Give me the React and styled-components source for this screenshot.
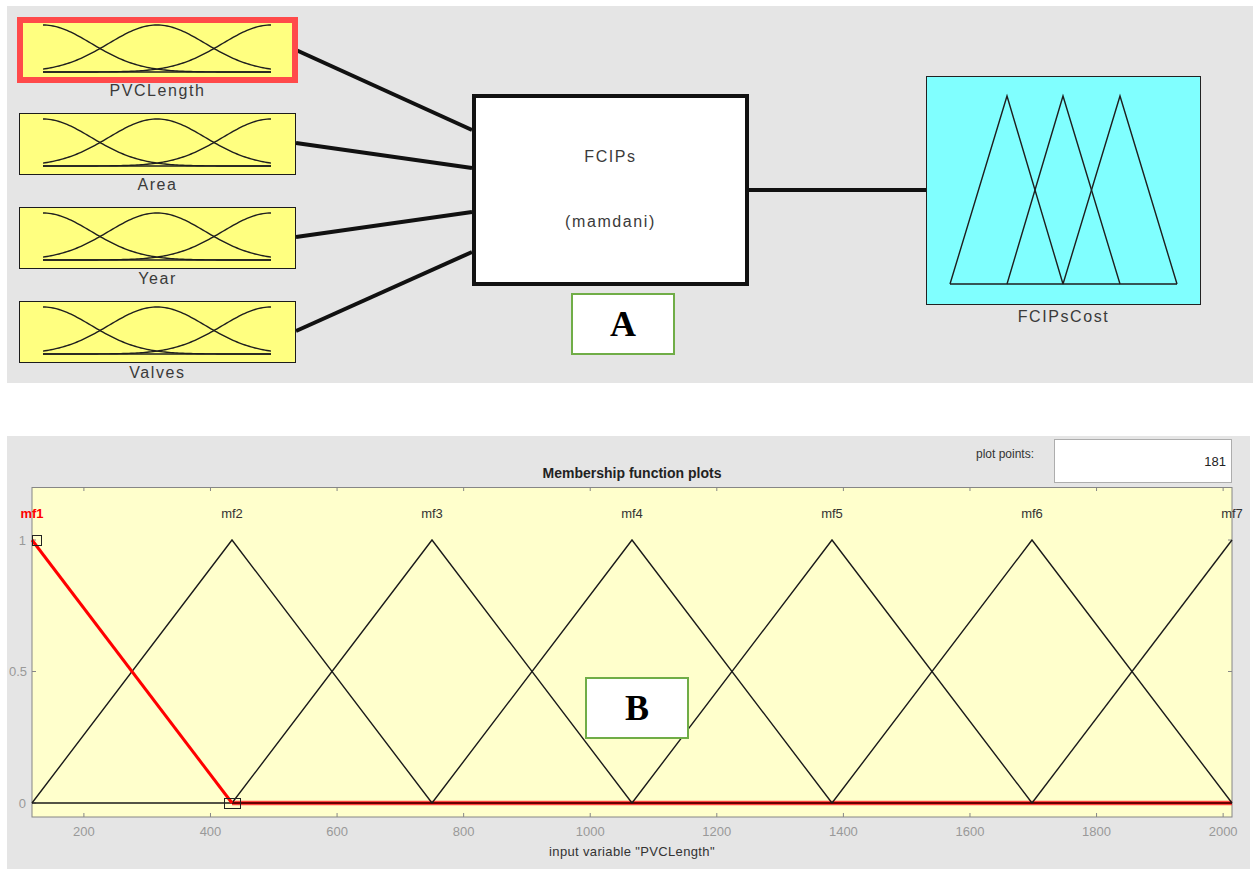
import React from "react";
import styled, { createGlobalStyle } from "styled-components";

const Global = createGlobalStyle`
  html, body { margin: 0; padding: 0; background: #ffffff; overflow: hidden; }
  body { font-family: "Liberation Sans", Arial, sans-serif; }
`;

const Page = styled.div`
  display: flex;
  flex-direction: column;
  padding: 6px 0 0 7px;
  width: 1253px;
  height: 869px;
  box-sizing: border-box;
`;

/* ---------- Panel A : FIS editor diagram ---------- */
const PanelA = styled.div`
  position: relative;
  width: 1246px;
  height: 377px;
  background: #e5e5e5;
  display: flex;
  align-items: flex-start;
`;

const Wires = styled.svg`
  position: absolute;
  left: 0;
  top: 0;
  pointer-events: none;
`;

const InputColumn = styled.div`
  position: relative;
  z-index: 1;
  display: flex;
  flex-direction: column;
  padding: 13px 0 0 12px;
`;

const InputBlock = styled.div`
  display: flex;
  flex-direction: column;
  height: 94px;
`;

const VarBox = styled.div`
  width: 277px;
  height: 62px;
  box-sizing: border-box;
  border: 1px solid #1c1c1c;
  background: #ffff80;
  box-shadow: ${(p) =>
    p.$selected ? "0 0 0 2px #ff4a4a, inset 0 0 0 3px #ff4a4a" : "none"};
  ${(p) => (p.$selected ? "border-color: #ff4a4a;" : "")}
`;

const VarLabel = styled.div`
  font-family: "Liberation Sans", Arial, sans-serif;
  font-size: 16px;
  line-height: 18px;
  letter-spacing: 1.6px;
  color: #3a3a3a;
  text-align: center;
  margin-top: ${(p) => p.$gap || 1}px;
`;

const CenterColumn = styled.div`
  position: relative;
  z-index: 1;
  display: flex;
  flex-direction: column;
  align-items: flex-start;
  margin: 88px 0 0 176px;
`;

const FisBox = styled.div`
  width: 277px;
  height: 192px;
  box-sizing: border-box;
  border: 4px solid #111111;
  background: #ffffff;
  display: flex;
  flex-direction: column;
  align-items: center;
  padding-top: 50px;
  gap: 47px;
`;

const FisText = styled.div`
  font-size: 16px;
  line-height: 18px;
  letter-spacing: 1.6px;
  color: #3a3a3a;
`;

const Badge = styled.div`
  width: 104px;
  height: 62px;
  box-sizing: border-box;
  border: 2px solid #70ad47;
  background: #ffffff;
  display: flex;
  align-items: center;
  justify-content: center;
  font-family: "Liberation Serif", "Times New Roman", serif;
  font-weight: bold;
  font-size: 36px;
  color: #000000;
`;

const BadgeA = styled(Badge)`
  margin: 7px 0 0 99px;
`;

const BadgeB = styled(Badge)`
  position: absolute;
  left: 578px;
  top: 241px;
  z-index: 2;
`;

const OutputColumn = styled.div`
  position: relative;
  z-index: 1;
  display: flex;
  flex-direction: column;
  margin: 70px 0 0 177px;
`;

const OutBox = styled.div`
  width: 275px;
  height: 229px;
  box-sizing: border-box;
  border: 1px solid #222222;
  background: #80ffff;
`;

/* ---------- Panel B : membership function plot ---------- */
const PanelB = styled.div`
  position: relative;
  width: 1243px;
  height: 433px;
  margin-top: 53px;
  background: #e5e5e5;
  display: flex;
  flex-direction: column;
`;

const Header = styled.div`
  display: grid;
  width: 1200px;
  height: 51px;
  margin-left: 25px;
`;

const Title = styled.div`
  grid-area: 1 / 1;
  justify-self: center;
  align-self: end;
  margin-bottom: 6px;
  font-size: 14px;
  line-height: 16px;
  font-weight: bold;
  color: #222222;
`;

const PlotPoints = styled.div`
  grid-area: 1 / 1;
  justify-self: end;
  align-self: start;
  margin-top: 3px;
  display: flex;
  align-items: flex-start;
`;

const PPLabel = styled.div`
  font-size: 12px;
  line-height: 14px;
  color: #333333;
  margin: 8px 20px 0 0;
`;

const PPBox = styled.div`
  width: 178px;
  height: 44px;
  box-sizing: border-box;
  border: 1px solid #adadad;
  background: #ffffff;
  display: flex;
  align-items: center;
  justify-content: flex-end;
  padding-right: 5px;
  font-size: 13px;
  color: #222222;
`;

const Chart = styled.svg`
  display: block;
  width: 1243px;
  height: 382px;
  font-family: "Liberation Sans", Arial, sans-serif;
`;

/* ---------- drawings ---------- */
function gaussPath(c, sigma, x0, x1, top, base) {
  const pts = [];
  for (let x = x0; x <= x1 + 0.01; x += 2) {
    const g = Math.exp(-((x - c) * (x - c)) / (2 * sigma * sigma));
    pts.push(`${x.toFixed(1)},${(base - (base - top) * g).toFixed(2)}`);
  }
  return "M" + pts.join(" L");
}

function GaussIcon() {
  const top = 5;
  const base = 52;
  const s = 48.4;
  return (
    <svg width="275" height="60" style={{ display: "block" }}>
      <g fill="none" stroke="#1e1e1e" strokeWidth="1.4">
        <line x1="23" y1={base} x2="251" y2={base} />
        <path d={gaussPath(23, s, 23, 251, top, base)} />
        <path d={gaussPath(137, s, 23, 251, top, base)} />
        <path d={gaussPath(251, s, 23, 251, top, base)} />
      </g>
    </svg>
  );
}

function TriIcon() {
  const top = 19;
  const base = 207;
  const xs = [23, 80, 136, 193, 250];
  return (
    <svg width="273" height="227" style={{ display: "block" }}>
      <g fill="none" stroke="#1e1e1e" strokeWidth="1.4" strokeLinejoin="miter">
        <line x1={xs[0]} y1={base} x2={xs[4]} y2={base} />
        <polyline points={`${xs[0]},${base} ${xs[1]},${top} ${xs[2]},${base}`} />
        <polyline points={`${xs[1]},${base} ${xs[2]},${top} ${xs[3]},${base}`} />
        <polyline points={`${xs[2]},${base} ${xs[3]},${top} ${xs[4]},${base}`} />
      </g>
    </svg>
  );
}

const inputs = [
  { name: "PVCLength", selected: true },
  { name: "Area" },
  { name: "Year" },
  { name: "Valves" },
];

const wires = [
  [289, 44, 465, 124],
  [289, 137, 465, 162],
  [289, 231, 465, 206],
  [289, 325, 465, 246],
  [742, 184, 919, 184],
];

const X = (v) => 32 + ((v - 118) * 1200) / 1896;
const Y1 = 540;
const Y0 = 803;

function MfChart() {
  const ticks = [200, 400, 600, 800, 1000, 1200, 1400, 1600, 1800, 2000];
  const peaks = [0, 1, 2, 3, 4, 5, 6].map((k) => 32 + 200 * k);
  return (
    <Chart viewBox="0 0 1243 382">
      <g transform="translate(-7,-487)">
        <rect x="32" y="487.5" width="1200" height="329.5" fill="#ffffcc" stroke="#868686" strokeWidth="1" />
        {ticks.map((v) => (
          <g key={v} stroke="#868686" strokeWidth="1">
            <line x1={X(v)} y1="487" x2={X(v)} y2="491" />
            <line x1={X(v)} y1="817" x2={X(v)} y2="813" />
          </g>
        ))}
        {[Y1, (Y1 + Y0) / 2, Y0].map((y) => (
          <g key={y} stroke="#868686" strokeWidth="1">
            <line x1="32" y1={y} x2="36" y2={y} />
            <line x1="1232" y1={y} x2="1228" y2={y} />
          </g>
        ))}
        {ticks.map((v) => (
          <text key={"t" + v} x={X(v)} y="831" fontSize="13" fill="#999999" textAnchor="middle" dominantBaseline="central">
            {v}
          </text>
        ))}
        <text x="26" y={Y1} fontSize="13" fill="#999999" textAnchor="end" dominantBaseline="central">1</text>
        <text x="27" y={(Y1 + Y0) / 2} fontSize="13" fill="#999999" textAnchor="end" dominantBaseline="central">0.5</text>
        <text x="26" y={Y0} fontSize="13" fill="#999999" textAnchor="end" dominantBaseline="central">0</text>

        {/* selected mf1 zero tail */}
        <line x1="232" y1={Y0} x2="1232" y2={Y0} stroke="#ff3030" strokeWidth="4.5" opacity="0.9" />
        <line x1="232" y1={Y0} x2="1232" y2={Y0} stroke="#6a0000" strokeWidth="2.2" />
        <line x1="32" y1={Y0} x2="232" y2={Y0} stroke="#1a1a1a" strokeWidth="1.4" />

        <g fill="none" stroke="#1a1a1a" strokeWidth="1.4">
          {peaks.slice(1).map((p, i) => {
            const left = p - 200;
            const right = Math.min(p + 200, 1232);
            const pts =
              p === 1232
                ? `${left},${Y0} ${p},${Y1}`
                : `${left},${Y0} ${p},${Y1} ${right},${Y0}`;
            return <polyline key={i} points={pts} />;
          })}
        </g>
        <line x1="32" y1={Y1} x2="232" y2={Y0} stroke="#ff0000" strokeWidth="3" />

        <rect x="32.5" y="535.5" width="9" height="10" fill="none" stroke="#222222" strokeWidth="1" />
        <rect x="224.5" y="798.5" width="16" height="10" fill="none" stroke="#222222" strokeWidth="1" />

        {peaks.map((p, i) => (
          <text
            key={"m" + i}
            x={p}
            y="513"
            fontSize="13"
            textAnchor="middle"
            dominantBaseline="central"
            fill={i === 0 ? "#ff0000" : "#333333"}
            fontWeight={i === 0 ? "bold" : "normal"}
          >
            {"mf" + (i + 1)}
          </text>
        ))}

        <text x="632" y="851" fontSize="13" fill="#333333" textAnchor="middle" dominantBaseline="central" letterSpacing="0.35">
          input variable "PVCLength"
        </text>
      </g>
    </Chart>
  );
}

export default function App() {
  return (
    <>
      <Global />
      <Page>
        <PanelA>
          <Wires width="1246" height="377">
            {wires.map(([x1, y1, x2, y2], i) => (
              <line key={i} x1={x1} y1={y1} x2={x2} y2={y2} stroke="#111111" strokeWidth="4" />
            ))}
          </Wires>
          <InputColumn>
            {inputs.map((inp) => (
              <InputBlock key={inp.name}>
                <VarBox $selected={inp.selected}>
                  <GaussIcon />
                </VarBox>
                <VarLabel>{inp.name}</VarLabel>
              </InputBlock>
            ))}
          </InputColumn>
          <CenterColumn>
            <FisBox>
              <FisText>FCIPs</FisText>
              <FisText>(mamdani)</FisText>
            </FisBox>
            <BadgeA>A</BadgeA>
          </CenterColumn>
          <OutputColumn>
            <OutBox>
              <TriIcon />
            </OutBox>
            <VarLabel $gap={3}>FCIPsCost</VarLabel>
          </OutputColumn>
        </PanelA>

        <PanelB>
          <Header>
            <Title>Membership function plots</Title>
            <PlotPoints>
              <PPLabel>plot points:</PPLabel>
              <PPBox>181</PPBox>
            </PlotPoints>
          </Header>
          <MfChart />
          <BadgeB>B</BadgeB>
        </PanelB>
      </Page>
    </>
  );
}
